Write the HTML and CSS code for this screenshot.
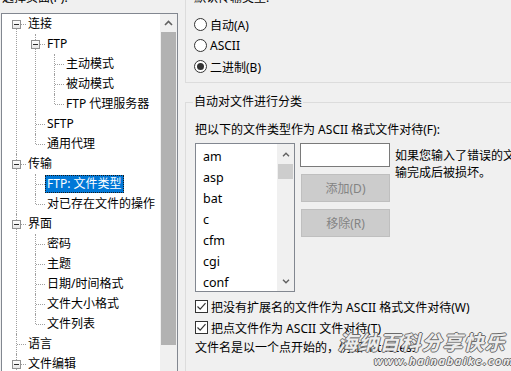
FILE: index.html
```html
<!DOCTYPE html>
<html lang="zh-CN">
<head>
    <meta charset="UTF-8">
    <meta name="viewport" content="width=device-width, initial-scale=1.0">
    <title>设置 - 文件类型</title>
    <link rel="stylesheet" href="styles.css">
</head>
<body>
    <div class="dialog">
        <div class="left">
            <div class="caption">选择页面(P):</div>
            <div class="tree-box">
                <ul class="tree">
                    <li><div class="row"><span class="box"></span><span class="label">连接</span></div>
                        <ul>
                            <li><div class="row"><span class="box"></span><span class="label">FTP</span></div>
                                <ul>
                                    <li><div class="row"><span class="label">主动模式</span></div></li>
                                    <li><div class="row"><span class="label">被动模式</span></div></li>
                                    <li><div class="row"><span class="label">FTP 代理服务器</span></div></li>
                                </ul>
                            </li>
                            <li><div class="row"><span class="label">SFTP</span></div></li>
                            <li><div class="row"><span class="label">通用代理</span></div></li>
                        </ul>
                    </li>
                    <li><div class="row"><span class="box"></span><span class="label">传输</span></div>
                        <ul>
                            <li><div class="row"><span class="label sel">FTP: 文件类型</span></div></li>
                            <li><div class="row"><span class="label">对已存在文件的操作</span></div></li>
                        </ul>
                    </li>
                    <li><div class="row"><span class="box"></span><span class="label">界面</span></div>
                        <ul>
                            <li><div class="row"><span class="label">密码</span></div></li>
                            <li><div class="row"><span class="label">主题</span></div></li>
                            <li><div class="row"><span class="label">日期/时间格式</span></div></li>
                            <li><div class="row"><span class="label">文件大小格式</span></div></li>
                            <li><div class="row"><span class="label">文件列表</span></div></li>
                        </ul>
                    </li>
                    <li><div class="row"><span class="label">语言</span></div></li>
                    <li><div class="row"><span class="box"></span><span class="label">文件编辑</span></div>
                        <ul>
                            <li><div class="row"><span class="label">文件类型关联</span></div></li>
                        </ul>
                    </li>
                    <li><div class="row"><span class="label">更新</span></div></li>
                    <li><div class="row"><span class="label">日志</span></div></li>
                </ul>
                <div class="vscroll">
                    <div class="arrow">
                        <svg width="9" height="6" viewBox="0 0 9 6"><path d="M1 5 L4.5 1.5 L8 5" fill="none" stroke="#606060" stroke-width="1.6"/></svg>
                    </div>
                    <div class="thumb big"></div>
                </div>
            </div>
        </div>

        <div class="right">
            <fieldset class="group first">
                <legend>默认传输类型:</legend>
                <label class="option"><span class="radio"></span>自动(A)</label>
                <label class="option"><span class="radio"></span>ASCII</label>
                <label class="option"><span class="radio on"></span>二进制(B)</label>
            </fieldset>

            <fieldset class="group second">
                <legend>自动对文件进行分类</legend>
                <div class="line">把以下的文件类型作为 ASCII 格式文件对待(F):</div>
                <div class="types">
                    <div class="listbox">
                        <ul class="items">
                            <li>am</li>
                            <li>asp</li>
                            <li>bat</li>
                            <li>c</li>
                            <li>cfm</li>
                            <li>cgi</li>
                            <li>conf</li>
                            <li>cpp</li>
                        </ul>
                        <div class="vscroll small">
                            <div class="arrow">
                                <svg width="8" height="5" viewBox="0 0 8 5"><path d="M1 4.2 L4 1.2 L7 4.2" fill="none" stroke="#606060" stroke-width="1.4"/></svg>
                            </div>
                            <div class="thumb"></div>
                            <div class="track"></div>
                            <div class="arrow">
                                <svg width="8" height="5" viewBox="0 0 8 5"><path d="M1 0.8 L4 3.8 L7 0.8" fill="none" stroke="#606060" stroke-width="1.4"/></svg>
                            </div>
                        </div>
                    </div>
                    <div class="actions">
                        <div class="input"></div>
                        <button disabled>添加(D)</button>
                        <button disabled>移除(R)</button>
                    </div>
                    <div class="hint">如果您输入了错误的文件类型，文件可能会在传<br>输完成后被损坏。</div>
                </div>
                <label class="check"><span class="box-check"><svg width="11" height="11" viewBox="0 0 11 11"><path d="M1.5 5.5 L4.2 8.2 L9.5 2.2" fill="none" stroke="#333" stroke-width="1.2"/></svg></span>把没有扩展名的文件作为 ASCII 格式文件对待(W)</label>
                <label class="check"><span class="box-check"><svg width="11" height="11" viewBox="0 0 11 11"><path d="M1.5 5.5 L4.2 8.2 L9.5 2.2" fill="none" stroke="#333" stroke-width="1.2"/></svg></span>把点文件作为 ASCII 文件对待(T)</label>
                <div class="line note">文件名是以一个点开始的，例如 .htaccess</div>
            </fieldset>
        </div>
    </div>

    <div class="watermark">
        <div class="wm-big">海纳百科分享快乐</div>
        <div class="wm-url">www.hainabaike.com</div>
    </div>
</body>
</html>
```

FILE: styles.css
```css
body {
    margin: 0;
    height: 371px;
    overflow: hidden;
    background-color: #f0f0f0;
    font-family: "Segoe UI", "Noto Sans", "Noto Sans CJK SC", sans-serif;
    font-size: 12px;
    color: #000;
}
.dialog {
    display: flex;
    gap: 7px;
    margin-top: -10px;
    padding-left: 1px;
}
.left {
    width: 177px;
    flex: none;
}
.caption {
    line-height: 16px;
    padding-left: 1px;
}
.tree-box {
    margin-top: 7px;
    height: 380px;
    display: flex;
    border: 1px solid #828790;
    background: white;
    overflow: hidden;
}

/* tree with dotted lines */
.tree, .tree ul {
    list-style: none;
    margin: 0;
    padding: 0;
}
.tree {
    flex: 1;
    padding-top: 0;
}
.tree ul {
    padding-left: 19px;
}
.tree li {
    position: relative;
}
.tree li::before {
    content: "";
    position: absolute;
    left: 14px;
    top: 0;
    bottom: 0;
    border-left: 1px dotted #a0a0a0;
}
.tree > li:first-child::before {
    top: 10px;
}
.tree ul > li:last-child::before {
    bottom: auto;
    height: 10px;
}
.row {
    position: relative;
    height: 20px;
    padding-left: 24px;
    display: flex;
    align-items: center;
}
.row::before {
    content: "";
    position: absolute;
    left: 15px;
    top: 10px;
    width: 9px;
    border-top: 1px dotted #a0a0a0;
}
.box {
    position: absolute;
    left: 10px;
    top: 6px;
    width: 9px;
    height: 9px;
    box-sizing: border-box;
    border: 1px solid #919191;
    background: linear-gradient(#ffffff, #e6e6e6);
    z-index: 1;
}
.box::after {
    content: "";
    position: absolute;
    left: 1px;
    top: 3px;
    width: 5px;
    height: 1px;
    background: #2b2b2b;
}
.label {
    padding: 0 2px;
    line-height: 18px;
    height: 18px;
    white-space: nowrap;
}
.label.sel {
    background-color: #0078d7;
    color: white;
    outline: 1px dotted #1a1a1a;
    outline-offset: -1px;
}

/* scrollbars */
.vscroll {
    width: 17px;
    flex: none;
    background: #f0f0f0;
    display: flex;
    flex-direction: column;
}
.arrow {
    height: 17px;
    display: flex;
    align-items: center;
    justify-content: center;
    flex: none;
}
.thumb {
    margin: 1px 1px 0 1px;
    height: 15px;
    background: #cdcdcd;
    flex: none;
}
.thumb.big {
    height: 313px;
    margin-top: 1px;
    background: #b2b2b2;
}
.track {
    flex: 1;
}

/* right side */
.right {
    width: 400px;
    flex: none;
}
.group {
    margin: 0;
    border: 1px solid #dcdcdc;
    border-right: none;
    padding: 8px 0 5px 9px;
}
.group legend {
    line-height: 16px;
    padding: 0 1px;
    margin-left: -2px;
}
.group.second {
    margin-top: 11px;
    padding-top: 12px;
    padding-bottom: 40px;
}
.option {
    display: flex;
    align-items: center;
    height: 21px;
    gap: 3px;
}
.radio {
    width: 13px;
    height: 13px;
    box-sizing: border-box;
    border: 1px solid #333;
    border-radius: 50%;
    background: white;
    margin-left: -1px;
    display: flex;
    align-items: center;
    justify-content: center;
}
.radio.on::after {
    content: "";
    width: 7px;
    height: 7px;
    border-radius: 50%;
    background: #333;
}
.line {
    line-height: 16px;
    white-space: nowrap;
}
.types {
    display: flex;
    gap: 5px;
    margin-top: 5px;
    align-items: flex-start;
}
.listbox {
    width: 100px;
    height: 149px;
    box-sizing: border-box;
    border: 1px solid #828790;
    background: white;
    display: flex;
    overflow: hidden;
}
.items {
    list-style: none;
    margin: 0;
    padding: 2px 0 0 7px;
    flex: 1;
}
.items li {
    height: 21px;
    line-height: 21px;
    font-size: 12.5px;
}
.vscroll.small .arrow {
    height: 20px;
}
.vscroll.small .thumb {
    margin-top: 0;
}
.actions {
    width: 90px;
    display: flex;
    flex-direction: column;
    gap: 7px;
}
.input {
    height: 24px;
    box-sizing: border-box;
    border: 1px solid #7a7a7a;
    background: white;
}
button {
    height: 28px;
    margin-left: 1px;
    border: 1px solid #bfbfbf;
    background-color: #cccccc;
    color: #838383;
    font-family: inherit;
    font-size: 12px;
    padding: 0;
}
.hint {
    line-height: 17px;
    padding-top: 4px;
    white-space: nowrap;
}
.check {
    display: flex;
    align-items: center;
    gap: 3px;
    height: 21px;
    white-space: nowrap;
}
.types + .check {
    margin-top: 4px;
}
.box-check {
    width: 13px;
    height: 13px;
    box-sizing: border-box;
    border: 1px solid #333;
    background: white;
    display: flex;
    align-items: center;
    justify-content: center;
}
.note {
    margin-top: 2px;
}

/* watermark over the corner */
.watermark {
    position: absolute;
    left: 334px;
    top: 331px;
    width: 175px;
    text-align: center;
    font-style: italic;
    font-weight: bold;
    color: rgba(255, 255, 255, 0.9);
    text-shadow: -1px 0 #6a6a6a, 1px 0 #6a6a6a, 0 -1px #6a6a6a, 0 1px #6a6a6a;
}
.wm-big {
    font-size: 20px;
    line-height: 24px;
    letter-spacing: 1px;
}
.wm-url {
    font-size: 11px;
    line-height: 12px;
    letter-spacing: 1.6px;
    padding-left: 40px;
}
```
